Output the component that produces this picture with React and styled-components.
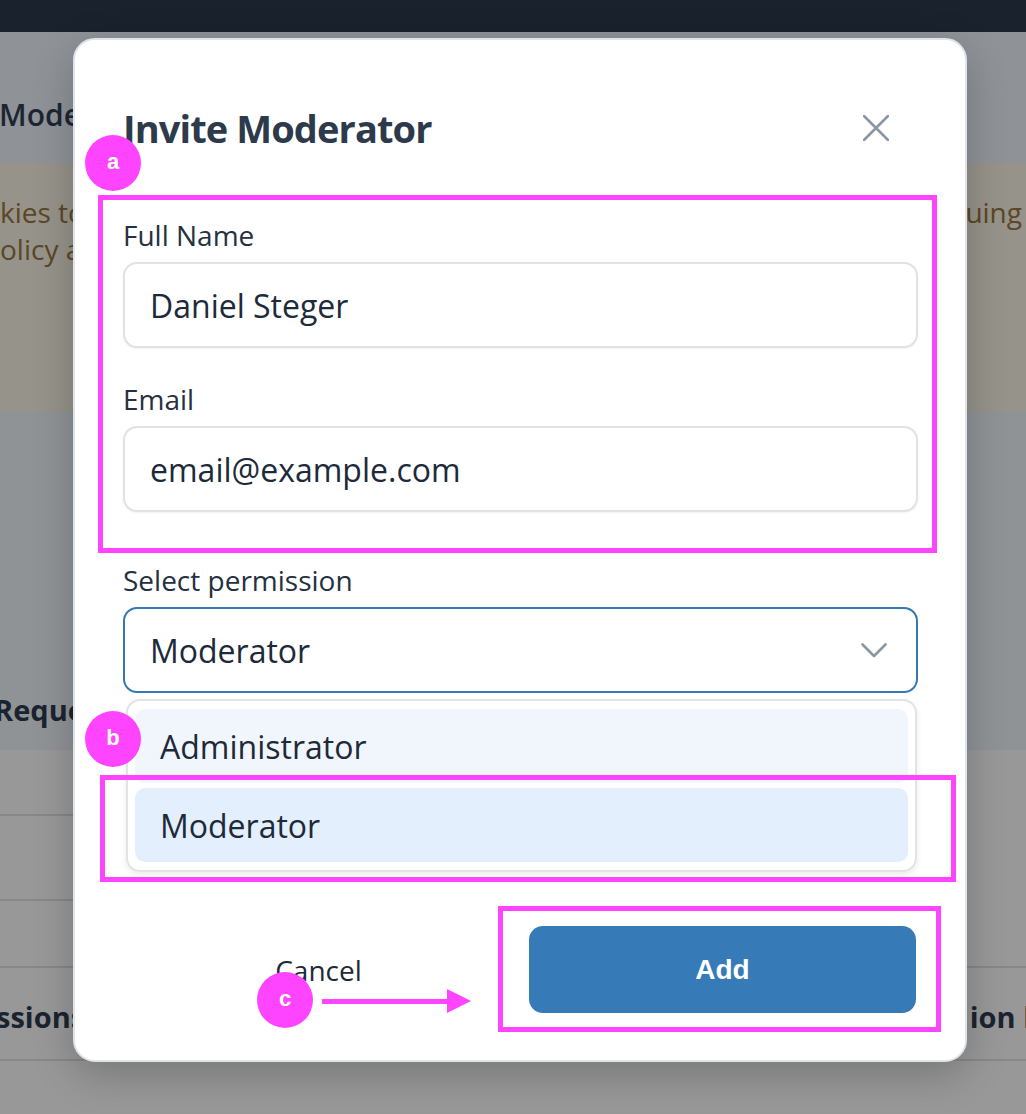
import React from 'react';
import styled, { createGlobalStyle } from 'styled-components';

const GlobalStyle = createGlobalStyle`
  html, body {
    margin: 0;
    padding: 0;
    background: #989898;
  }
  * {
    box-sizing: border-box;
  }
`;

const permissions = ['Administrator', 'Moderator'];

const App = () => {
  return (
    <>
      <GlobalStyle />
      <Page>
        <TopBar />
        <HeadRow>
          <PageTitle>Moderators</PageTitle>
        </HeadRow>
        <Banner>
          <BannerLine>
            <span>kies to improve</span>
            <span>uing</span>
          </BannerLine>
          <BannerLine>
            <span>olicy and</span>
          </BannerLine>
        </Banner>
        <Section>
          <SectionTitle>Requests</SectionTitle>
        </Section>
        <TableRow $h={65} $short />
        <TableRow $h={85} $short />
        <TableRow $h={67} />
        <TableRow $h={93}>
          <RowText>ssions</RowText>
          <RowText $right>ion l</RowText>
        </TableRow>

        <Modal>
          <Header>
            <Title>Invite Moderator</Title>
            <CloseButton aria-label="Close">
              <svg width="26" height="26" viewBox="0 0 26 26" fill="none">
                <path d="M1 1L25 25M25 1L1 25" stroke="#8a97a3" strokeWidth="2.6" strokeLinecap="round" />
              </svg>
            </CloseButton>
          </Header>

          <Field $mt={61}>
            <Label>Full Name</Label>
            <Input defaultValue="Daniel Steger" />
          </Field>
          <Field $mt={32}>
            <Label>Email</Label>
            <Input defaultValue="email@example.com" />
          </Field>
          <Field $mt={49}>
            <Label>Select permission</Label>
            <Select>
              <span>Moderator</span>
              <svg width="26" height="15" viewBox="0 0 26 15" fill="none">
                <path d="M1.5 1.5L13 13L24.5 1.5" stroke="#8a96a0" strokeWidth="2.6" strokeLinecap="round" strokeLinejoin="round" />
              </svg>
            </Select>
            <Dropdown>
              {permissions.map((p) => (
                <Option key={p} $selected={p === 'Moderator'}>
                  {p}
                </Option>
              ))}
            </Dropdown>
          </Field>

          <Footer>
            <CancelButton>Cancel</CancelButton>
            <AddButton>Add</AddButton>
          </Footer>
        </Modal>

        <Marker $x={98} $y={195} $w={839} $h={358} />
        <Marker $x={100} $y={775} $w={856} $h={107} />
        <Marker $x={498} $y={906} $w={443} $h={126} />

        <Badge $x={113} $y={163}>a</Badge>
        <Badge $x={113} $y={739}>b</Badge>
        <Badge $x={285} $y={1000}>c</Badge>

        <Arrow width="152" height="26" viewBox="0 0 152 26">
          <path d="M0 13.5H128" stroke="#ff44ff" strokeWidth="5" />
          <path d="M125 1L149 13L125 25Z" fill="#ff44ff" />
        </Arrow>
      </Page>
    </>
  );
};

// Background page
const Page = styled.div`
  position: relative;
  width: 1026px;
  height: 1114px;
  overflow: hidden;
  font-family: 'Open Sans', 'Noto Sans', sans-serif;
  background: #989898;
`;

const TopBar = styled.div`
  height: 32px;
  background: #19222d;
`;

const HeadRow = styled.div`
  height: 131px;
  background: #8f9398;
  padding-top: 62px;
`;

const PageTitle = styled.div`
  font-size: 30px;
  line-height: 41px;
  font-weight: 600;
  color: #1c2633;
  margin-left: -1px;
`;

const Banner = styled.div`
  height: 248px;
  background: #96938a;
  padding-top: 31px;
`;

const BannerLine = styled.div`
  display: flex;
  justify-content: space-between;
  font-size: 28px;
  line-height: 37px;
  color: #5b4727;
  padding-right: 4px;
`;

const Section = styled.div`
  height: 339px;
  background: #909396;
  display: flex;
  align-items: flex-end;
  padding-bottom: 20px;
`;

const SectionTitle = styled.div`
  font-size: 29px;
  line-height: 40px;
  font-weight: 700;
  color: #1a2430;
  margin-left: -6px;
`;

const TableRow = styled.div`
  position: relative;
  height: ${(p) => p.$h}px;
  display: flex;
  align-items: center;
  justify-content: space-between;
  &::after {
    content: '';
    position: absolute;
    left: 0;
    bottom: -1px;
    width: ${(p) => (p.$short ? '50%' : '100%')};
    height: 2px;
    background: #878787;
  }
`;

const RowText = styled.span`
  font-size: 29px;
  font-weight: 700;
  color: #1a2430;
  margin-left: ${(p) => (p.$right ? '0' : '-4px')};
  margin-right: ${(p) => (p.$right ? '-6px' : '0')};
  padding-top: 6px;
`;

// Modal
const Modal = styled.div`
  position: absolute;
  left: 73px;
  top: 38px;
  width: 894px;
  background: #ffffff;
  border: 2px solid #dde4ec;
  border-radius: 22px;
  padding: 61px 47px 47px 48px;
  box-shadow: 0 12px 40px rgba(0, 0, 0, 0.22);
`;

const Header = styled.div`
  display: flex;
  align-items: center;
  justify-content: space-between;
`;

const Title = styled.h2`
  margin: 0;
  font-size: 38px;
  line-height: 54px;
  font-weight: 700;
  letter-spacing: -0.9px;
  color: #2d3a4c;
`;

const CloseButton = styled.button`
  display: flex;
  align-items: center;
  justify-content: center;
  width: 26px;
  height: 26px;
  padding: 0;
  margin-right: 29px;
  border: none;
  background: none;
  cursor: pointer;
`;

const Field = styled.div`
  display: flex;
  flex-direction: column;
  margin-top: ${(p) => p.$mt}px;
`;

const Label = styled.label`
  font-size: 28px;
  line-height: 38px;
  color: #25313f;
  margin-bottom: 8px;
`;

const Input = styled.input`
  height: 86px;
  width: 100%;
  border: 2px solid #e2e2e2;
  border-radius: 14px;
  padding: 0 25px;
  font-family: 'Open Sans', sans-serif;
  font-size: 32px;
  color: #1d2a3a;
  outline: none;
  box-shadow: 0 1px 2px rgba(0, 0, 0, 0.05);
`;

const Select = styled.div`
  height: 86px;
  display: flex;
  align-items: center;
  justify-content: space-between;
  border: 2px solid #3478b4;
  border-radius: 14px;
  padding: 0 29px 0 25px;
  font-size: 32px;
  color: #1d2a3a;
`;

const Dropdown = styled.div`
  display: flex;
  flex-direction: column;
  gap: 5px;
  margin: 6px 1px 0 3px;
  padding: 8px 7px;
  border: 2px solid #e3e3e3;
  border-radius: 14px;
  box-shadow: 0 3px 6px rgba(0, 0, 0, 0.08);
`;

const Option = styled.div`
  height: 74px;
  display: flex;
  align-items: center;
  padding-left: 25px;
  border-radius: 10px;
  font-size: 32px;
  color: #1d2a3a;
  background: ${(p) => (p.$selected ? '#e3effc' : '#f1f6fd')};
`;

const Footer = styled.div`
  display: grid;
  grid-template-columns: 1fr 1fr;
  gap: 19px;
  margin-top: 54px;
  margin-right: 2px;
`;

const CancelButton = styled.button`
  height: 87px;
  border: none;
  background: transparent;
  font-family: 'Open Sans', sans-serif;
  font-size: 28px;
  color: #1d2a3a;
  cursor: pointer;
  padding: 0 0 0 4px;
`;

const AddButton = styled.button`
  height: 87px;
  border: none;
  border-radius: 14px;
  background: #367bb7;
  color: #ffffff;
  font-family: 'Liberation Sans', Arial, sans-serif;
  font-weight: 700;
  font-size: 28px;
  cursor: pointer;
`;

// Annotations
const Marker = styled.div`
  position: absolute;
  left: ${(p) => p.$x}px;
  top: ${(p) => p.$y}px;
  width: ${(p) => p.$w}px;
  height: ${(p) => p.$h}px;
  border: 5px solid #ff44ff;
  pointer-events: none;
`;

const Badge = styled.div`
  position: absolute;
  left: ${(p) => p.$x - 28}px;
  top: ${(p) => p.$y - 28}px;
  width: 56px;
  height: 56px;
  border-radius: 50%;
  background: #ff44ff;
  color: #ffffff;
  display: flex;
  align-items: center;
  justify-content: center;
  font-family: 'Liberation Sans', Arial, sans-serif;
  font-weight: 700;
  font-size: 22px;
  padding-bottom: 2px;
`;

const Arrow = styled.svg`
  position: absolute;
  left: 322px;
  top: 988px;
`;

export default App;
